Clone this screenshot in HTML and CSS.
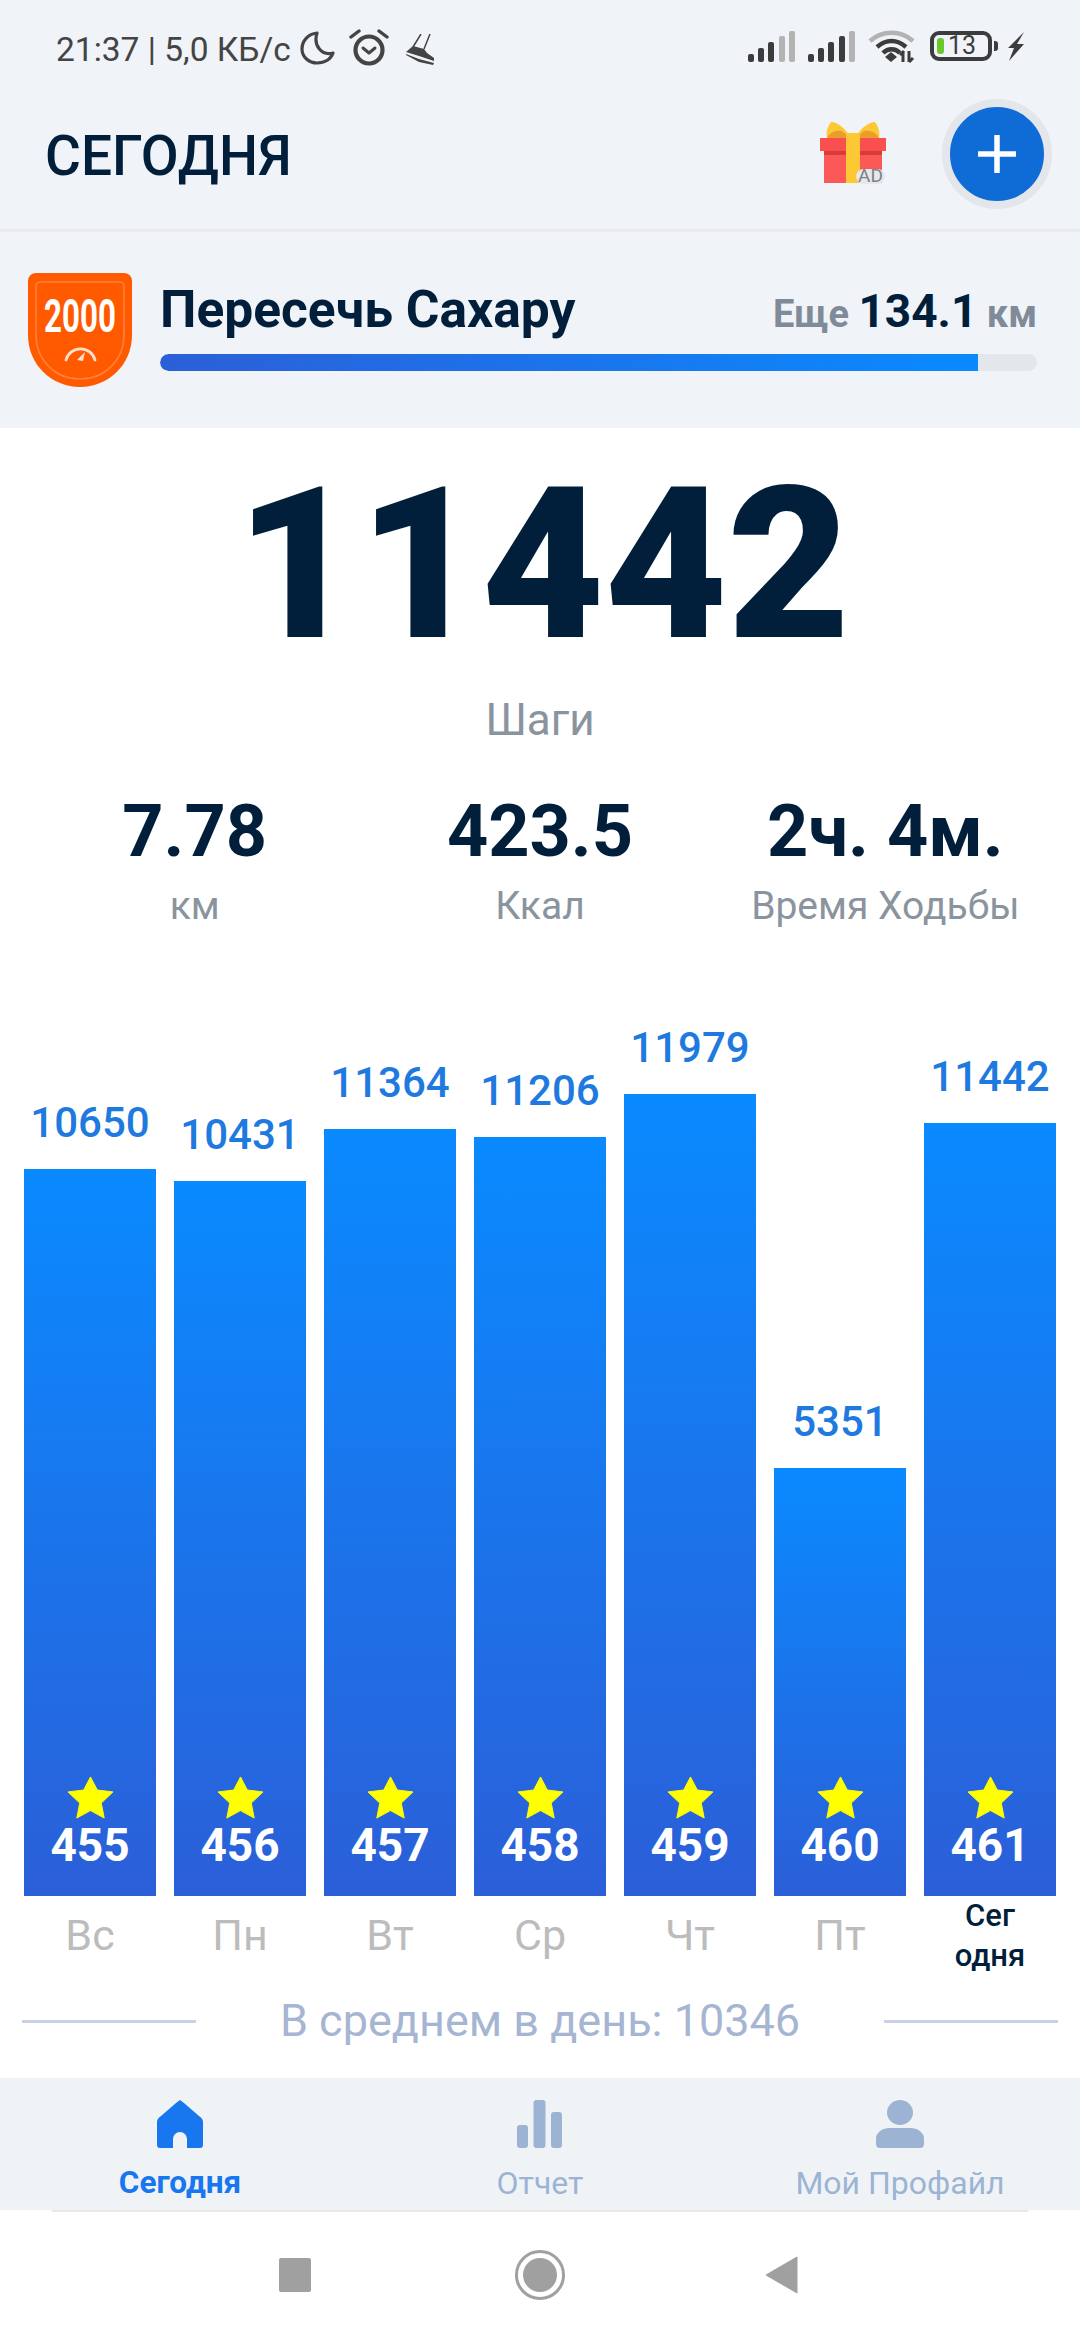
FILE: index.html
```html
<!DOCTYPE html>
<html lang="ru">
<head>
<meta charset="utf-8">
<title>Сегодня</title>
<link rel="stylesheet" href="styles.css">
</head>
<body>
<div class="app">
  <div class="top">
    <div class="status">
      <div class="status-left">
        <span class="status-text">21:37 | 5,0 КБ/с</span>
        <svg class="ic-moon" viewBox="0 0 35 34"><path d="M17 2C8 3 2 10 2 18c0 8 7 14 15 14 8 0 14-4 16-10-11 3-20-7-16-20z" fill="none" stroke="#444" stroke-width="3.200" stroke-linejoin="round"/></svg>
        <svg class="ic-alarm" viewBox="0 0 40 37"><circle cx="20" cy="21" r="13.500" fill="none" stroke="#444" stroke-width="4.200"/><path d="M14 19l6 5 6-5" fill="none" stroke="#444" stroke-width="3" stroke-linecap="round" stroke-linejoin="round"/><path d="M2 8l8-6M38 8l-8-6" stroke="#444" stroke-width="3.400" stroke-linecap="round"/></svg>
        <svg class="ic-shoe" viewBox="0 0 30 32"><path d="M16 0L8 13M25 0l-6 15" stroke="#444" stroke-width="1.500" fill="none"/><path d="M8 12l11 3 3 4 7 5v3l-15-5L1 18z" fill="#444"/><path d="M1 20l13 5 15 4-1 2-14-3L1 21z" fill="#444"/></svg>
      </div>
      <div class="status-right">
        <svg class="ic-signal" viewBox="0 0 48 31"><rect x="0" y="23" width="6" height="8" rx="2" fill="#3c3c3c"/><rect x="10" y="17" width="6" height="14" rx="2" fill="#3c3c3c"/><rect x="20" y="11" width="6" height="20" rx="2" fill="#3c3c3c"/><rect x="31" y="5" width="6" height="26" rx="2" fill="#b3b3b3"/><rect x="41" y="0" width="6" height="31" rx="2" fill="#b3b3b3"/></svg>
        <svg class="ic-signal" viewBox="0 0 48 31"><rect x="0" y="23" width="6" height="8" rx="2" fill="#3c3c3c"/><rect x="10" y="17" width="6" height="14" rx="2" fill="#3c3c3c"/><rect x="20" y="11" width="6" height="20" rx="2" fill="#3c3c3c"/><rect x="31" y="5" width="6" height="26" rx="2" fill="#3c3c3c"/><rect x="41" y="0" width="6" height="31" rx="2" fill="#b3b3b3"/></svg>
        <svg class="ic-wifi" viewBox="0 0 47 34"><path d="M2 12C14 1 33 1 45 12" fill="none" stroke="#b3b3b3" stroke-width="4.500"/><path d="M9 18c9-8 20-8 29 0" fill="none" stroke="#3c3c3c" stroke-width="4.500"/><path d="M15 24c5-5 12-5 17 0" fill="none" stroke="#3c3c3c" stroke-width="4.500"/><path d="M17 28l6-5 6 5-6 5z" fill="#3c3c3c"/><path d="M35 22v11M36 22l-4 4M41 33V22M41 33l4-4" stroke="#3c3c3c" stroke-width="3" fill="none"/></svg>
        <div class="battery"><span class="battery-fill"></span><span class="battery-num">13</span></div>
        <span class="battery-nub"></span>
        <svg class="ic-bolt" viewBox="0 0 19 29"><path d="M18 0L2 16h6L3 29l15-17h-7z" fill="#3c3c3c"/></svg>
      </div>
    </div>
    <header class="header">
      <h1 class="title">СЕГОДНЯ</h1>
      <div class="header-actions">
        <svg class="ic-gift" viewBox="0 0 66 62">
          <path d="M31 17C26 8 18 1 11 1 7 6 6 12 7 17z" fill="#fcc934"/><path d="M35 17C40 8 48 1 55 1 59 6 60 12 59 17z" fill="#fcc934"/>
          <path d="M7 17c3-6 9-8 15-7l9 7zM59 17c-3-6-9-8-15-7l-9 7z" fill="#ec9c2b"/>
          <rect x="0" y="17" width="66" height="13" fill="#f9504f"/><rect x="4" y="30" width="58" height="32" fill="#fb5858"/><rect x="4" y="30" width="58" height="4" fill="#d93a3a"/>
          <rect x="26" y="12" width="14" height="50" fill="#fcc934"/>
          <rect x="36" y="48" width="29" height="15" rx="7.500" fill="#e6e8ec"/>
          <text x="50.500" y="61" class="gift-ad" text-anchor="middle">AD</text>
        </svg>
        <button class="add-btn" type="button" aria-label="Добавить"><svg class="ic-plus" viewBox="0 0 38 38"><path d="M19 0v38M0 19h38" stroke="#fff" stroke-width="5.500"/></svg></button>
      </div>
    </header>
    <section class="challenge">
      <svg class="badge" viewBox="0 0 104 114">
        <path d="M8 0h88a8 8 0 0 1 8 8v54c0 30-24 52-52 52S0 92 0 62V8a8 8 0 0 1 8-8z" fill="#ff5a00"/>
        <path d="M12 9h80a4 4 0 0 1 4 4v49c0 25-19 44-44 44S8 87 8 62V13a4 4 0 0 1 4-4z" fill="none" stroke="#ff7f3a" stroke-width="1.600"/>
        <text transform="translate(52 59) scale(.68 1)" class="badge-num" text-anchor="middle">2000</text>
        <path d="M38 87a15 15 0 0 1 29 0" fill="none" stroke="#ffe0cf" stroke-width="2.800" stroke-linecap="round"/>
        <path d="M49 87l8-8-2 9z" fill="#ffe0cf"/>
      </svg>
      <div class="challenge-body">
        <div class="challenge-head">
          <span class="challenge-name">Пересечь Сахару</span>
          <span class="challenge-left">Еще <b>134.1</b> км</span>
        </div>
        <div class="progress"><div class="progress-fill" style="width:93.3%"></div></div>
      </div>
    </section>
  </div>

  <main class="main">
    <div class="big">11442</div>
    <div class="big-label">Шаги</div>
    <div class="stats">
      <div class="stat"><div class="stat-val">7.78</div><div class="stat-label">км</div></div>
      <div class="stat"><div class="stat-val">423.5</div><div class="stat-label">Ккал</div></div>
      <div class="stat"><div class="stat-val">2ч. 4м.</div><div class="stat-label">Время Ходьбы</div></div>
    </div>
    <div class="chart">
      <div class="col"><div class="val">10650</div><div class="bar" style="height:727px"><svg class="star" viewBox="0 0 48 46" preserveAspectRatio="none"><path d="M24 1l7 14 16 2-12 12 3 16-14-8-14 8 3-16L1 17l16-2z" fill="#ffff00" stroke="#ffff00" stroke-linejoin="round"/></svg><div class="num">455</div></div></div>
      <div class="col"><div class="val">10431</div><div class="bar" style="height:715px"><svg class="star" viewBox="0 0 48 46" preserveAspectRatio="none"><path d="M24 1l7 14 16 2-12 12 3 16-14-8-14 8 3-16L1 17l16-2z" fill="#ffff00" stroke="#ffff00" stroke-linejoin="round"/></svg><div class="num">456</div></div></div>
      <div class="col"><div class="val">11364</div><div class="bar" style="height:767px"><svg class="star" viewBox="0 0 48 46" preserveAspectRatio="none"><path d="M24 1l7 14 16 2-12 12 3 16-14-8-14 8 3-16L1 17l16-2z" fill="#ffff00" stroke="#ffff00" stroke-linejoin="round"/></svg><div class="num">457</div></div></div>
      <div class="col"><div class="val">11206</div><div class="bar" style="height:759px"><svg class="star" viewBox="0 0 48 46" preserveAspectRatio="none"><path d="M24 1l7 14 16 2-12 12 3 16-14-8-14 8 3-16L1 17l16-2z" fill="#ffff00" stroke="#ffff00" stroke-linejoin="round"/></svg><div class="num">458</div></div></div>
      <div class="col"><div class="val">11979</div><div class="bar" style="height:802px"><svg class="star" viewBox="0 0 48 46" preserveAspectRatio="none"><path d="M24 1l7 14 16 2-12 12 3 16-14-8-14 8 3-16L1 17l16-2z" fill="#ffff00" stroke="#ffff00" stroke-linejoin="round"/></svg><div class="num">459</div></div></div>
      <div class="col"><div class="val">5351</div><div class="bar" style="height:428px"><svg class="star" viewBox="0 0 48 46" preserveAspectRatio="none"><path d="M24 1l7 14 16 2-12 12 3 16-14-8-14 8 3-16L1 17l16-2z" fill="#ffff00" stroke="#ffff00" stroke-linejoin="round"/></svg><div class="num">460</div></div></div>
      <div class="col"><div class="val">11442</div><div class="bar" style="height:773px"><svg class="star" viewBox="0 0 48 46" preserveAspectRatio="none"><path d="M24 1l7 14 16 2-12 12 3 16-14-8-14 8 3-16L1 17l16-2z" fill="#ffff00" stroke="#ffff00" stroke-linejoin="round"/></svg><div class="num">461</div></div></div>
    </div>
    <div class="days">
      <div class="day">Вс</div><div class="day">Пн</div><div class="day">Вт</div><div class="day">Ср</div><div class="day">Чт</div><div class="day">Пт</div><div class="day day-today">Сег<br>одня</div>
    </div>
    <div class="avg"><span class="avg-line"></span><span class="avg-text">В среднем в день: 10346</span><span class="avg-line"></span></div>
  </main>

  <nav class="tabs">
    <div class="tab tab-active">
      <svg class="tab-ic" viewBox="0 0 48 48"><path d="M24 0l4 3 15 13c3 2 4 4 4 6v23a3 3 0 0 1-3 3H31V39a7 7 0 0 0-14 0v9H4a3 3 0 0 1-3-3V22c0-2 1-4 4-6L20 3z" fill="#1877ee"/></svg>
      <span>Сегодня</span>
    </div>
    <div class="tab">
      <svg class="tab-ic" viewBox="0 0 48 48"><rect x="1" y="25" width="11" height="23" rx="3" fill="#9db3d4"/><rect x="17.500" y="0" width="12" height="48" rx="3" fill="#9db3d4"/><rect x="35" y="12" width="11" height="36" rx="3" fill="#9db3d4"/></svg>
      <span>Отчет</span>
    </div>
    <div class="tab">
      <svg class="tab-ic" viewBox="0 0 48 48"><ellipse cx="24" cy="12.500" rx="13" ry="12.500" fill="#9db3d4"/><path d="M14 28h20c8 0 14 5 14 10v6a4 4 0 0 1-4 4H4a4 4 0 0 1-4-4v-6c0-5 6-10 14-10z" fill="#9db3d4"/></svg>
      <span>Мой Профайл</span>
    </div>
  </nav>

  <div class="sysnav">
    <span class="sys-square"></span>
    <span class="sys-circle"><span class="sys-dot"></span></span>
    <svg class="sys-back" viewBox="0 0 33 38"><path d="M32 1v36L1 19z" fill="#a0a0a0" stroke="#a0a0a0" stroke-linejoin="round"/></svg>
  </div>
</div>
</body>
</html>
```
FILE: styles.css
```css
* { box-sizing: border-box; }
html, body { margin: 0; padding: 0; }
body { font-family: Roboto, "Noto Sans", sans-serif; background: #fff; color: #011f3a; }
.app { width: 1080px; height: 2340px; display: flex; flex-direction: column; overflow: hidden; }

.top { background: #f0f3f8; }
.status { height: 90px; display: flex; justify-content: space-between; align-items: flex-start; padding: 29px 55px 0 56px; }
.status-left, .status-right { display: flex; align-items: center; }
.status-text { font-size: 33.5px; line-height: 38px; color: #444; margin-right: 9px; white-space: nowrap; }
.ic-moon { width: 35px; height: 34px; margin-bottom: 4px; }
.ic-alarm { width: 40px; height: 37px; margin-left: 14px; margin-bottom: 4px; }
.ic-shoe { width: 30px; height: 32px; margin-left: 16px; }
.ic-signal { width: 48px; height: 31px; margin-right: 12px; }
.ic-wifi { width: 47px; height: 34px; margin-right: 15px; }
.battery { width: 62px; height: 30px; border: 4px solid #3c3c3c; border-radius: 9px; display: flex; align-items: center; padding-left: 3px; }
.battery-fill { width: 7px; height: 16px; background: #6cc72a; border-radius: 3px; }
.battery-num { font-size: 25px; line-height: 22px; color: #3c3c3c; margin-left: 4px; }
.battery-nub { width: 4px; height: 10px; background: #3c3c3c; border-radius: 0 3px 3px 0; margin-left: 2px; }
.ic-bolt { width: 19px; height: 29px; margin-left: 8px; }

.header { height: 142px; display: flex; justify-content: space-between; align-items: center; padding: 0 28px 0 45px; border-bottom: 3px solid #e8eaef; }
.title { margin: 0; font-size: 55px; font-weight: 500; color: #011f3a; line-height: 60px; padding-bottom: 7px; }
.header-actions { display: flex; align-items: center; gap: 56px; padding-bottom: 12px; }
.ic-gift { width: 66px; height: 62px; margin-bottom: 4px; overflow: visible; }
.gift-ad { font-family: Roboto, sans-serif; font-size: 19px; fill: #7d8188; }
.add-btn { width: 110px; height: 110px; border-radius: 50%; background: #0f6bd6; border: 8px solid #e3e6ea; padding: 0; display: flex; align-items: center; justify-content: center; }
.ic-plus { width: 38px; height: 38px; }

.challenge { height: 196px; display: flex; align-items: flex-start; padding: 41px 43px 0 28px; }
.badge { width: 104px; height: 114px; flex: none; overflow: visible; }
.badge-num { font-family: Roboto, sans-serif; font-size: 46px; font-weight: 700; fill: #fff; }
.challenge-body { flex: 1; margin-left: 28px; }
.challenge-head { display: flex; justify-content: space-between; align-items: baseline; height: 81px; line-height: 74px; }
.challenge-name { font-size: 51.5px; font-weight: 700; color: #011f3a; }
.challenge-left { font-size: 38px; font-weight: 700; color: #7f8b99; }
.challenge-left b { font-size: 46px; color: #011f3a; font-weight: 700; }
.progress { height: 17px; background: #e3e6ea; border-radius: 9px; overflow: hidden; }
.progress-fill { height: 100%; border-radius: 9px 0 0 9px; background: linear-gradient(90deg, #2c5fd8, #0a8aff); }

.main { height: 1650px; background: #fff; display: flex; flex-direction: column; }
.big { margin-top: 31px; text-align: center; font-size: 212px; line-height: 212px; font-weight: 900; color: #011f3a; padding-left: 6px; }
.big-label { margin-top: 24px; text-align: center; font-size: 44px; line-height: 50px; color: #8a949e; }
.stats { margin-top: 47px; display: grid; grid-template-columns: repeat(3, 1fr); padding: 0 22px; }
.stat { text-align: center; }
.stat-val { font-size: 72px; line-height: 80px; font-weight: 700; color: #011f3a; white-space: nowrap; }
.stat-label { font-size: 39px; line-height: 44px; color: #8a949e; margin-top: 12px; }
.chart { height: 968px; display: grid; grid-template-columns: repeat(7, 132px); column-gap: 18px; padding: 0 24px; align-items: end; flex: none; }
.col { display: flex; flex-direction: column; align-items: center; }
.val { font-size: 42px; line-height: 48px; font-weight: 500; color: #1f7ae0; margin-bottom: 22px; }
.bar { width: 132px; display: flex; flex-direction: column; align-items: center; justify-content: flex-end; padding-bottom: 26px; background: linear-gradient(180deg, #0a8aff, #2b5fd8); }
.star { width: 47px; height: 43px; }
.num { font-size: 46px; line-height: 50px; font-weight: 700; color: #fff; margin-top: 1px; }
.days { height: 90px; display: grid; grid-template-columns: repeat(7, 132px); column-gap: 18px; padding: 0 24px; }
.day { text-align: center; font-size: 43px; line-height: 50px; color: #bcbcbc; padding-top: 14px; }
.day-today { font-size: 31px; line-height: 40px; font-weight: 500; color: #011f3a; padding-top: 0; }
.avg { display: flex; align-items: center; justify-content: space-between; padding: 0 22px; height: 70px; }
.avg-line { width: 174px; height: 3px; background: #c8d2e4; }
.avg-text { font-size: 45px; line-height: 50px; color: #a6b5d2; white-space: nowrap; }

.tabs { height: 132px; background: #f0f3f6; display: grid; grid-template-columns: repeat(3, 360px); }
.tab { display: flex; flex-direction: column; align-items: center; padding-top: 22px; font-size: 32px; line-height: 36px; color: #9db3d4; }
.tab-active { color: #1877ee; font-weight: 700; font-size: 31.5px; }
.tab-ic { width: 48px; height: 48px; margin-bottom: 17px; }
.sysnav { flex: 1; display: flex; align-items: center; justify-content: center; background: linear-gradient(#e6e8ea, #e6e8ea) no-repeat 52px 0 / 976px 2px; }
.sys-square { width: 32px; height: 34px; background: #a0a0a0; border-radius: 2px; }
.sys-circle { width: 50px; height: 50px; border: 3.5px solid #a0a0a0; border-radius: 50%; margin: 0 204px; display: flex; align-items: center; justify-content: center; flex: none; }
.sys-dot { width: 34px; height: 34px; background: #a0a0a0; border-radius: 50%; }
.sys-back { width: 33px; height: 38px; margin-left: -4px; margin-right: 3px; }
```
